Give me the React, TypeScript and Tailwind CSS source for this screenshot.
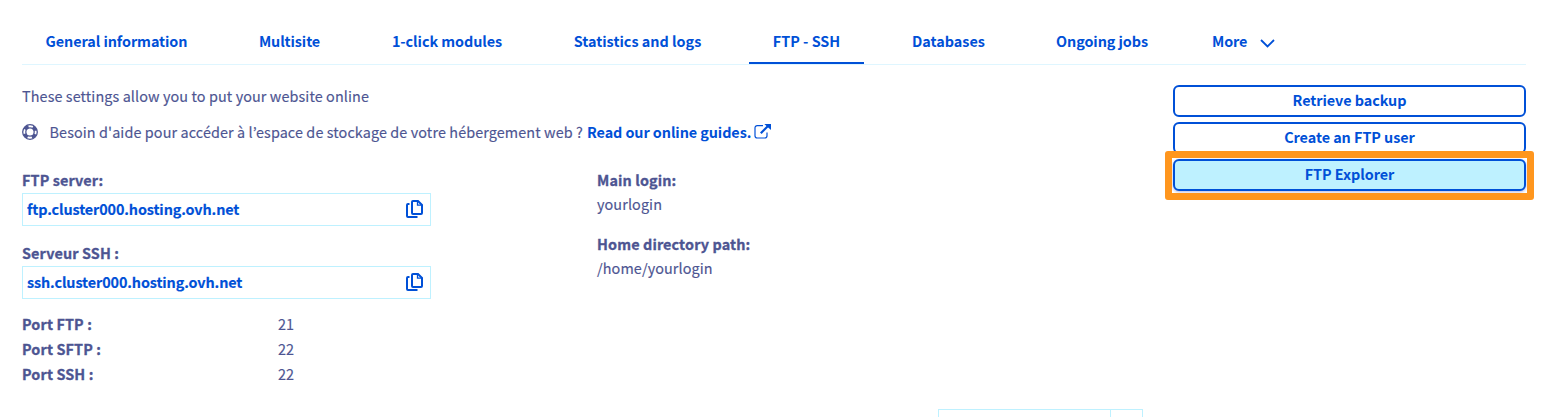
type Tab = { label: string; box: string; text?: string; active?: boolean };

const tabs: Tab[] = [
  { label: 'General information', box: 'w-[189px]' },
  { label: 'Multisite', box: 'w-[109px] ml-[24px]', text: 'tracking-[-0.1px]' },
  { label: '1-click modules', box: 'w-[158px] ml-[24px]' },
  { label: 'Statistics and logs', box: 'w-[175px] ml-[24px]', text: 'tracking-normal' },
  { label: 'FTP - SSH', box: 'w-[115px] ml-[24px]', text: 'tracking-normal', active: true },
  { label: 'Databases', box: 'w-[121px] ml-[24px]', text: 'tracking-normal' },
  { label: 'Ongoing jobs', box: 'w-[140px] ml-[23px]' },
];

const ports = [
  { name: 'Port FTP :', value: '21' },
  { name: 'Port SFTP :', value: '22' },
  { name: 'Port SSH :', value: '22' },
];

function LifeRing() {
  return (
    <svg className="size-4 shrink-0" viewBox="0 0 16 16" fill="none" stroke="#4d5592">
      <circle cx="8" cy="8" r="7.3" strokeWidth="1.3" />
      <circle cx="8" cy="8" r="4.2" strokeWidth="1.3" />
      <circle cx="8" cy="8" r="5.6" strokeWidth="3.2" strokeDasharray="4.4 4.396" strokeDashoffset="-2.2" />
    </svg>
  );
}

function ExternalLink() {
  return (
    <svg className="-mt-0.5 h-[15px] w-[17px] shrink-0" viewBox="0 0 17 15" fill="none" stroke="#0050d7">
      <path d="M9 1.600H3.200A2.200 2.200 0 0 0 1 3.800V11.800A2.200 2.200 0 0 0 3.200 14H10.800A2.200 2.200 0 0 0 13 11.800V8.500" strokeWidth="1.200" />
      <path d="M6.800 9.200L14 2" strokeWidth="2.200" />
      <path d="M10.300 0H17V6Z" fill="#0050d7" stroke="none" />
    </svg>
  );
}

function CopyIcon() {
  return (
    <svg className="-mt-px h-[18px] w-[17px] shrink-0" viewBox="0 0 17 18" fill="none" stroke="#0050d7" strokeWidth="2">
      <path d="M7 1H12L16 5V13A1 1 0 0 1 15 14H7A1 1 0 0 1 6 13V2A1 1 0 0 1 7 1Z" />
      <path d="M11.500 1V5.200H16" strokeWidth="1.300" />
      <path d="M3.500 4H2A1 1 0 0 0 1 5V16A1 1 0 0 0 2 17H11.500" />
    </svg>
  );
}

function Host({ name }: { name: string }) {
  return (
    <div className="mt-px flex h-[33px] w-[409px] items-center justify-between border border-[#bef1ff] pl-1 pr-[7px]">
      <span className="-mt-0.5 font-bold tracking-[-0.12px] text-[#0050d7]">{name}</span>
      <CopyIcon />
    </div>
  );
}

function Label({ children }: { children: string }) {
  return <span className="font-bold tracking-[0.12px] [-webkit-text-stroke:0.3px_#4d5592]">{children}</span>;
}

function ActionButton({ label, active }: { label: string; active?: boolean }) {
  return (
    <button
      className={`flex h-8 w-full shrink-0 items-center justify-center rounded-md border-2 border-[#0050d7] pb-[3px] font-bold tracking-[-0.05px] text-[#0050d7] ${active ? 'bg-[#bef1ff] shadow-[0_1px_3px_rgba(0,14,156,0.3)]' : 'bg-white'}`}
    >
      {label}
    </button>
  );
}

export default function App() {
  return (
    <div className="relative h-[417px] w-[1547px] overflow-hidden bg-white px-[22px] font-['Noto_Sans_CJK_KR','Noto_Sans',sans-serif] text-[14.4px] leading-[24px] text-[#4d5592]">
      <nav className="flex h-[65px] w-[1504px] border-b border-[#dff6ff] pt-[29px] font-bold text-[#0050d7]">
        {tabs.map((t) => (
          <div
            key={t.label}
            className={`flex h-[35px] shrink-0 justify-center border-b-2 ${t.active ? 'border-[#0050d7]' : 'border-transparent'} ${t.box}`}
          >
            <span className={`whitespace-nowrap ${t.text ?? 'tracking-[-0.07px]'}`}>{t.label}</span>
          </div>
        ))}
        <div className="ml-[40px] flex items-start">
          <span className="tracking-[-0.1px]">More</span>
          <svg className="ml-[13px] mt-[10px] h-[10px] w-[15px]" viewBox="0 0 15 10" fill="none" stroke="#0050d7" strokeWidth="1.800">
            <path d="M1 1L7.500 7.500L14 1" />
          </svg>
        </div>
      </nav>
      <div className="flex">
        <main className="w-[1151px] shrink-0 pt-5 [-webkit-text-stroke:0.15px_currentColor]">
          <p className="-mt-px tracking-[0.1px]">These settings allow you to put your website online</p>
          <div className="mt-3 flex items-center">
            <LifeRing />
            <span className="ml-[11.500px] tracking-[0.1px]">
              Besoin d'aide pour accéder à l’espace de stockage de votre hébergement web ?
            </span>
            <a className="ml-[4px] mr-[2.500px] font-bold tracking-[-0.08px] text-[#0050d7] [-webkit-text-stroke:0px]">Read our online guides.</a>
            <ExternalLink />
          </div>
          <div className="mt-6 flex">
            <section className="w-[575px]">
              <h2><Label>FTP server:</Label></h2>
              <Host name="ftp.cluster000.hosting.ovh.net" />
              <h2 className="mt-[15px]"><Label>Serveur SSH :</Label></h2>
              <Host name="ssh.cluster000.hosting.ovh.net" />
              <dl className="mt-[13px]">
                {ports.map((p) => (
                  <div key={p.name} className="flex h-[25px]">
                    <dt className="w-[256px]"><Label>{p.name}</Label></dt>
                    <dd className="tracking-[0.1px]">{p.value}</dd>
                  </div>
                ))}
              </dl>
            </section>
            <section className="tracking-[0.1px]">
              <h2><Label>Main login:</Label></h2>
              <p>yourlogin</p>
              <h2 className="mt-4"><Label>Home directory path:</Label></h2>
              <p>/home/yourlogin</p>
            </section>
          </div>
        </main>
        <aside className="relative flex w-[353px] shrink-0 flex-col gap-[5px] self-start pt-5">
          <ActionButton label="Retrieve backup" />
          <ActionButton label="Create an FTP user" />
          <ActionButton label="FTP Explorer" active />
          <div className="absolute -left-2 top-[86px] h-[49px] w-[369px] rounded-[3px] border-7 border-[#ff961e]" />
        </aside>
      </div>
      <div className="absolute left-[938px] top-[409px] flex h-[20px] w-[205px] border border-[#bef1ff]">
        <div className="w-[172px] border-r border-[#bef1ff]" />
      </div>
    </div>
  );
}
